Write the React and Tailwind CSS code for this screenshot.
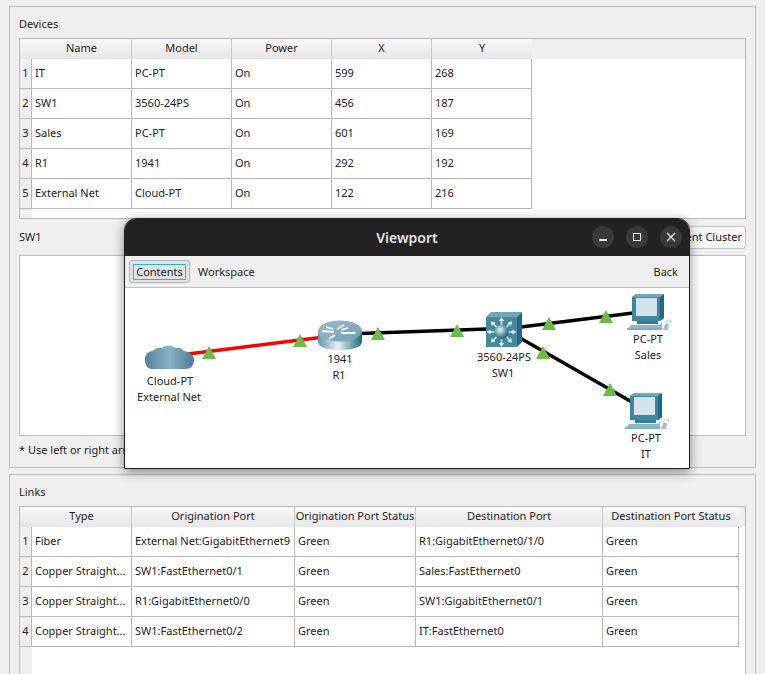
const FONT = "font-['Noto_Sans','Open_Sans',sans-serif]";

const devices = [
  ["IT", "PC-PT", "On", "599", "268"],
  ["SW1", "3560-24PS", "On", "456", "187"],
  ["Sales", "PC-PT", "On", "601", "169"],
  ["R1", "1941", "On", "292", "192"],
  ["External Net", "Cloud-PT", "On", "122", "216"],
];
const links = [
  ["Fiber", "External Net:GigabitEthernet9", "Green", "R1:GigabitEthernet0/1/0", "Green"],
  ["Copper Straight...", "SW1:FastEthernet0/1", "Green", "Sales:FastEthernet0", "Green"],
  ["Copper Straight...", "R1:GigabitEthernet0/0", "Green", "SW1:GigabitEthernet0/1", "Green"],
  ["Copper Straight...", "SW1:FastEthernet0/2", "Green", "IT:FastEthernet0", "Green"],
];

function Table({ headers, rows, cols, outer }) {
  return (
    <div className={`flex flex-col overflow-hidden border border-[#b8b8b8] bg-white ${outer}`}>
      <div className="flex h-[20px] shrink-0 bg-[#efefef]">
        <div className="h-full w-[12px] shrink-0 bg-gradient-to-b from-[#f8f8f8] to-[#e6e6e6]" />
        {headers.map((h, i) => (
          <div
            key={h}
            className={`${cols[i]} flex h-full shrink-0 items-center justify-center border-r border-[#c8c8c8] bg-gradient-to-b from-[#f8f8f8] to-[#e6e6e6] pb-px last:border-r-0`}
          >
            {h}
          </div>
        ))}
      </div>
      {rows.map((r, ri) => (
        <div key={ri} className="flex h-[30px] shrink-0">
          <div className="flex h-full w-[12px] shrink-0 items-center justify-center border-r border-b border-[#b8b8b8] bg-[#efefef]">
            {ri + 1}
          </div>
          {r.map((c, i) => (
            <div
              key={i}
              className={`${cols[i]} flex h-full shrink-0 items-center overflow-hidden whitespace-nowrap border-r border-b border-[#b8b8b8] pl-[3px]`}
            >
              {c}
            </div>
          ))}
        </div>
      ))}
      <div className="min-h-0 flex-1">
        <div className="h-full w-[12px] bg-[#efefef]" />
      </div>
    </div>
  );
}

function Tri({ x, y }) {
  return <polygon points={`${x - 7},${y + 13} ${x + 7},${y + 13} ${x},${y}`} fill="#6cbb45" />;
}

function PC({ dx, dy }) {
  return (
    <g transform={`translate(${dx} ${dy})`}>
      <polygon points="632,297 636,294 664,294 664,318 660,321 632,321" fill="#3f87a0" />
      <polygon points="660,297 664,294 664,318 660,321" fill="#1f6a85" />
      <polygon points="632,297 636,294 664,294 660,297" fill="#6fa9bd" />
      <rect x="636" y="298" width="21" height="18" fill="#d3e3ea" />
      <rect x="637" y="321" width="21" height="3" fill="#2f7d98" />
      <polygon points="631,325 660,325 662,322 662,328 627,330" fill="#8db8c8" />
      <rect x="627" y="328" width="35" height="2" fill="#7fb0c3" />
      <polygon points="663,330 665,324 669,324 668,330" fill="#9cc0cf" />
      <path d="M665 323 q2 -4 6 -3 l-1 3" fill="none" stroke="#a9c4cf" strokeWidth="0.8" />
    </g>
  );
}

function Diagram() {
  const angles = [0, 45, 90, 135, 180, 225, 270, 315];
  return (
    <svg className="absolute left-0 top-0" width="564" height="180" viewBox="125 288 564 180">
      <defs>
        <linearGradient id="cloud" x1="0" x2="1" y1="0" y2="0">
          <stop offset="0" stopColor="#4f8198" />
          <stop offset="0.5" stopColor="#8bb4c4" />
          <stop offset="1" stopColor="#457e97" />
        </linearGradient>
        <linearGradient id="router" x1="0" x2="1" y1="0" y2="0">
          <stop offset="0" stopColor="#5f97ab" />
          <stop offset="0.45" stopColor="#e6f0f3" />
          <stop offset="1" stopColor="#1d6a85" />
        </linearGradient>
        <linearGradient id="routerTop" x1="0" x2="1" y1="0" y2="1">
          <stop offset="0" stopColor="#9dbccb" />
          <stop offset="1" stopColor="#6f9fb3" />
        </linearGradient>
        <radialGradient id="ball" cx="0.4" cy="0.35" r="0.7">
          <stop offset="0" stopColor="#f0f7f9" />
          <stop offset="0.5" stopColor="#6fa6b9" />
          <stop offset="1" stopColor="#17566d" />
        </radialGradient>
      </defs>
      <line x1="188" y1="354" x2="320" y2="337.5" stroke="#ff0000" strokeWidth="3.5" />
      <line x1="360" y1="333.5" x2="487" y2="329" stroke="#000" strokeWidth="3.5" />
      <line x1="521" y1="327" x2="633" y2="313" stroke="#000" strokeWidth="3.5" />
      <line x1="521" y1="338.5" x2="631" y2="401.5" stroke="#000" strokeWidth="3.5" />

      <path
        d="M152 369 C146 369 145 362 145 359 C145 354 149 351 153 351 C155 348 159 347 162 348 C165 345 172 345 175 348 C178 347 182 348 184 351 C190 352 194 355 194 360 C194 365 191 369 186 369 Z"
        fill="url(#cloud)"
      />

      <path d="M318 331 V342 C318 347 328 350 340 350 C352 350 362 347 362 342 V331 Z" fill="url(#router)" />
      <ellipse cx="340" cy="331" rx="22" ry="10.5" fill="url(#routerTop)" />
      <path d="M322 331 L334 332 M344 325 L337 329 M341 333 L356 333 M335 335 L329 339" stroke="#fff" strokeWidth="2" />
      <path d="M326 327 L333 329 M348 328 L341 330" stroke="#fff" strokeWidth="1.4" />

      <polygon points="486,317 491,312 522,312 517,317" fill="#6ea6b8" />
      <rect x="486" y="317" width="31" height="30" fill="#44899f" />
      <polygon points="517,317 522,312 522,342 517,347" fill="#1e6a84" />
      {angles.map((a) => (
        <g key={a} transform={`translate(501.5 332) rotate(${a})`}>
          <rect x="7" y="-0.7" width="5" height="1.4" fill="#e8f2f5" />
          <polygon points="11,-2.6 15,0 11,2.6" fill="#e8f2f5" />
        </g>
      ))}
      <circle cx="501.5" cy="332" r="7" fill="url(#ball)" />

      <PC dx={0} dy={0} />
      <PC dx={-2} dy={99} />

      <Tri x={209} y={346} />
      <Tri x={300} y={334} />
      <Tri x={378} y={327} />
      <Tri x={457} y={324} />
      <Tri x={549} y={317} />
      <Tri x={606} y={310} />
      <Tri x={543} y={346} />
      <Tri x={610} y={383} />
    </svg>
  );
}

const labels = [
  ["Cloud-PT", "left-[45px] top-[85px]"],
  ["External Net", "left-[44px] top-[101px]"],
  ["1941", "left-[215px] top-[63px]"],
  ["R1", "left-[214px] top-[79px]"],
  ["3560-24PS", "left-[379px] top-[61px]"],
  ["SW1", "left-[378px] top-[77px]"],
  ["PC-PT", "left-[523px] top-[43px]"],
  ["Sales", "left-[523px] top-[59px]"],
  ["PC-PT", "left-[521px] top-[142px]"],
  ["IT", "left-[521px] top-[158px]"],
];

function Viewport() {
  return (
    <div className="absolute left-[124px] top-[218px] flex h-[251px] w-[566px] flex-col overflow-hidden rounded-t-[12px] border border-[#1c1c1c] bg-white shadow-[0_3px_12px_rgba(0,0,0,0.45)]">
      <div className="relative flex h-[37px] shrink-0 items-center justify-center bg-[#222222] pb-px text-[14px] font-semibold text-[#e4e4e4]">
        Viewport
        <div className="absolute left-[467px] top-[7px] flex gap-[12px]">
          <div className="flex h-[22px] w-[22px] items-center justify-center rounded-full bg-[#393939]">
            <div className="mt-[6px] h-[1.5px] w-[8px] bg-[#e8e8e8]" />
          </div>
          <div className="flex h-[22px] w-[22px] items-center justify-center rounded-full bg-[#393939]">
            <div className="h-[8px] w-[8px] border border-[#e8e8e8]" />
          </div>
          <div className="flex h-[22px] w-[22px] items-center justify-center rounded-full bg-[#393939]">
            <svg width="10" height="10" viewBox="0 0 10 10">
              <path d="M1 1 L9 9 M9 1 L1 9" stroke="#e8e8e8" strokeWidth="1.3" />
            </svg>
          </div>
        </div>
      </div>
      <div className="flex h-[32px] shrink-0 items-center justify-between border-b border-[#c0c0c0] bg-[#efefef] pl-[4px] pr-[11px]">
        <div className="flex items-center gap-[8px]">
          <div className="flex h-[23px] w-[61px] items-center justify-center rounded-[3px] border border-[#b4b4b4] bg-[#e3e3e3]">
            <div className="flex h-[16px] w-[53px] items-center justify-center border border-[#1cb8dc] pt-px">Contents</div>
          </div>
          <span className="pt-px">Workspace</span>
        </div>
        <span className="pt-px">Back</span>
      </div>
      <div className="relative flex-1 bg-white">
        <Diagram />
        {labels.map(([t, c], i) => (
          <span key={i} className={`absolute -translate-x-1/2 whitespace-nowrap leading-[16px] ${c}`}>
            {t}
          </span>
        ))}
      </div>
    </div>
  );
}

export default function App() {
  return (
    <div className={`${FONT} relative h-[674px] w-[765px] overflow-hidden bg-[#efefef] text-[11px] text-[#1c1c1c]`}>
      <div className="flex h-full flex-col pl-[9px] pr-[9px] pt-[6px]">
        <div className="flex h-[462px] shrink-0 flex-col border border-[#bdbdbd] px-[9px]">
          <div className="flex h-[31px] shrink-0 items-center pt-[2px] leading-none">Devices</div>
          <Table
            headers={["Name", "Model", "Power", "X", "Y"]}
            rows={devices}
            cols={["w-[100px]", "w-[100px]", "w-[100px]", "w-[100px]", "w-[100px]"]}
            outer="h-[181px] shrink-0"
          />
          <div className="flex h-[36px] shrink-0 items-center justify-between">
            <span>SW1</span>
            <div className="flex h-[23px] w-[120px] items-center justify-end rounded-[3px] border border-[#c0c0c0] bg-[#f6f6f6] pr-[3px]">
              Parent Cluster
            </div>
          </div>
          <div className="h-[181px] shrink-0 border border-[#bdbdbd] bg-white" />
          <div className="flex h-[30px] shrink-0 items-center pb-[2px]">* Use left or right arrow keys</div>
        </div>
        <div className="mt-[6px] flex min-h-0 flex-1 flex-col border-x border-t border-[#bdbdbd] px-[9px]">
          <div className="flex h-[31px] shrink-0 items-center pt-[2px] leading-none">Links</div>
          <Table
            headers={["Type", "Origination Port", "Origination Port Status", "Destination Port", "Destination Port Status"]}
            rows={links}
            cols={["w-[100px]", "w-[163px]", "w-[121px]", "w-[187px]", "w-[136px]"]}
            outer="min-h-0 flex-1 border-b-0"
          />
        </div>
      </div>
      <Viewport />
    </div>
  );
}
